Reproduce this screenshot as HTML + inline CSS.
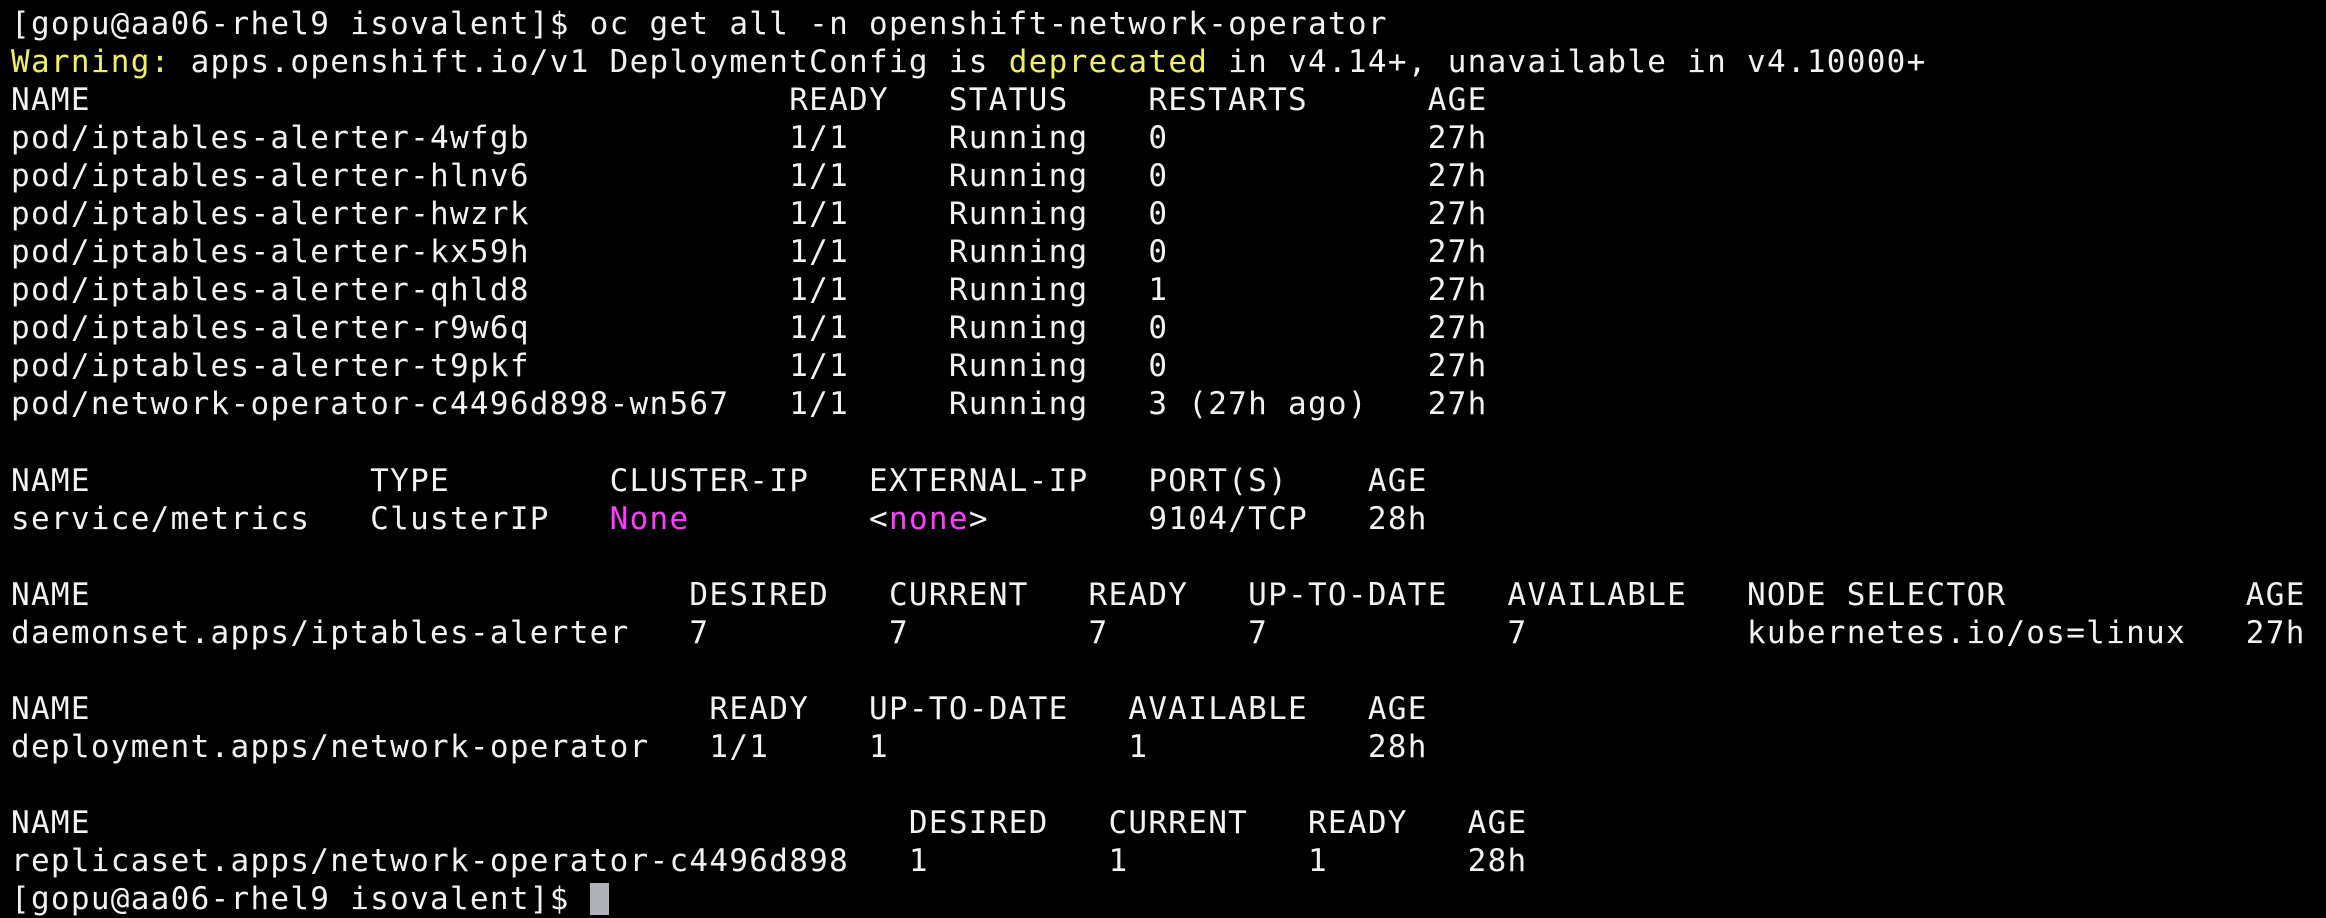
<!DOCTYPE html>
<html><head><meta charset="utf-8"><style>
html,body{margin:0;padding:0;background:#000;width:2326px;height:918px;overflow:hidden}
pre{position:absolute;left:11px;top:5px;margin:0;font-family:"DejaVu Sans Mono","Liberation Mono",monospace;font-size:31px;letter-spacing:1.29px;line-height:38.05px;color:#f2f2f2}
.y{color:#f0f060}.m{color:#ff3cff}
.c{display:inline-block;width:19px;height:32px;background:#b0b0b8;vertical-align:-6px}
</style></head><body><pre>[gopu@aa06-rhel9 isovalent]$ oc get all -n openshift-network-operator
<span class="y">Warning:</span> apps.openshift.io/v1 DeploymentConfig is <span class="y">deprecated</span> in v4.14+, unavailable in v4.10000+
NAME                                   READY   STATUS    RESTARTS      AGE
pod/iptables-alerter-4wfgb             1/1     Running   0             27h
pod/iptables-alerter-hlnv6             1/1     Running   0             27h
pod/iptables-alerter-hwzrk             1/1     Running   0             27h
pod/iptables-alerter-kx59h             1/1     Running   0             27h
pod/iptables-alerter-qhld8             1/1     Running   1             27h
pod/iptables-alerter-r9w6q             1/1     Running   0             27h
pod/iptables-alerter-t9pkf             1/1     Running   0             27h
pod/network-operator-c4496d898-wn567   1/1     Running   3 (27h ago)   27h

NAME              TYPE        CLUSTER-IP   EXTERNAL-IP   PORT(S)    AGE
service/metrics   ClusterIP   <span class="m">None</span>         &lt;<span class="m">none</span>&gt;        9104/TCP   28h

NAME                              DESIRED   CURRENT   READY   UP-TO-DATE   AVAILABLE   NODE SELECTOR            AGE
daemonset.apps/iptables-alerter   7         7         7       7            7           kubernetes.io/os=linux   27h

NAME                               READY   UP-TO-DATE   AVAILABLE   AGE
deployment.apps/network-operator   1/1     1            1           28h

NAME                                         DESIRED   CURRENT   READY   AGE
replicaset.apps/network-operator-c4496d898   1         1         1       28h
[gopu@aa06-rhel9 isovalent]$ <span class="c"></span></pre></body></html>
